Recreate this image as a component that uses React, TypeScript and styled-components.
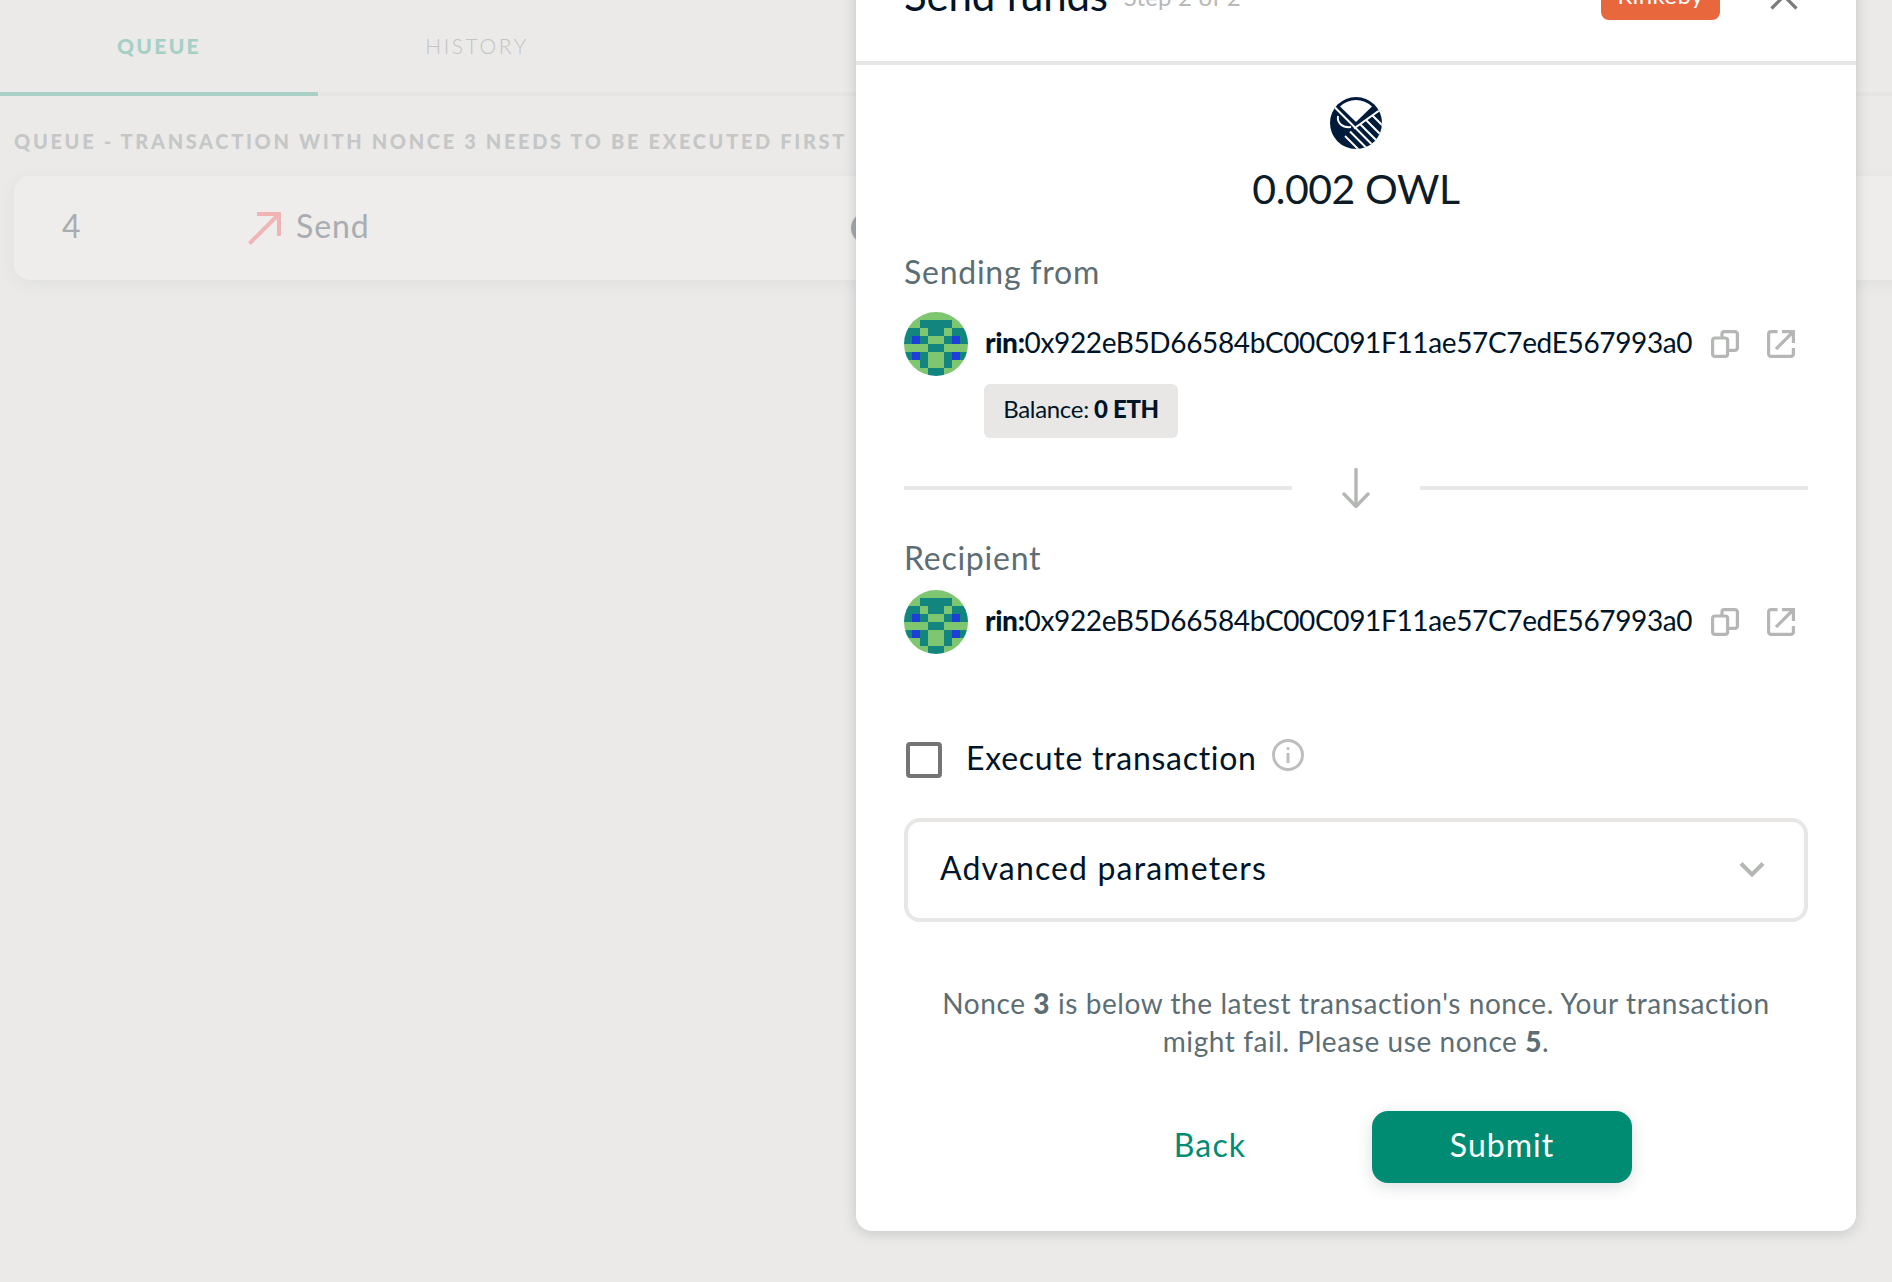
import React from "react";
import styled, { createGlobalStyle } from "styled-components";

const GlobalStyle = createGlobalStyle`
  html, body {
    margin: 0;
    padding: 0;
    height: 100%;
    overflow: hidden;
    font-family: Lato, "Open Sans", sans-serif;
    background: #ebeae8;
  }
`;

const Page = styled.div`
  position: relative;
  width: 1892px;
  height: 1282px;
  overflow: hidden;
  background: #ebeae8;
`;

const Tabs = styled.div`
  display: flex;
  height: 92px;
  border-bottom: 4px solid #e6e5e3;
`;

const Tab = styled.div<{ $active?: boolean }>`
  width: 318px;
  height: 96px;
  box-sizing: border-box;
  display: flex;
  align-items: center;
  justify-content: center;
  padding-bottom: 2px;
  font-size: 21px;
  letter-spacing: ${(p) => (p.$active ? "2.3px" : "2.6px")};
  font-weight: ${(p) => (p.$active ? 900 : 300)};
  color: ${(p) => (p.$active ? "#a6d0c6" : "#c2c4c6")};
  border-bottom: 4px solid ${(p) => (p.$active ? "#aacfc6" : "transparent")};
`;

const QueueTitle = styled.h2`
  margin: 29px 0 0 14px;
  font-size: 20px;
  line-height: 32px;
  font-weight: 900;
  letter-spacing: 2.65px;
  color: #c5c7c7;
  white-space: nowrap;
`;

const QueueCard = styled.div`
  display: grid;
  grid-template-columns: 186px 603px 32px;
  align-items: center;
  height: 104px;
  margin: 19px -40px 0 14px;
  padding-left: 48px;
  border-radius: 16px;
  background: #eeedeb;
  box-shadow: 0 4px 20px rgba(40, 54, 61, 0.05);
  color: #a9acb1;
  font-size: 32px;
`;

const SendCell = styled.div`
  display: flex;
  align-items: center;
  gap: 15px;
`;

const TxText = styled.span`
  margin-bottom: 6px;
  letter-spacing: 0.9px;
`;

const Ghost = styled.div`
  width: 32px;
  height: 32px;
  border-radius: 50%;
  background: #a3a8ad;
`;

const Overlay = styled.div`
  position: absolute;
  inset: 0;
  display: flex;
  align-items: flex-end;
  padding: 0 0 51px 856px;
`;

const Modal = styled.section`
  width: 1000px;
  display: flex;
  flex-direction: column;
  flex-shrink: 0;
  background: #fff;
  border-radius: 0 0 16px 16px;
  box-shadow: 0 2px 14px rgba(40, 54, 61, 0.2);
  color: #001428;
`;

const Header = styled.header`
  display: flex;
  align-items: flex-end;
  height: 120px;
  box-sizing: border-box;
  padding: 0 48px 41px 48px;
  border-bottom: 4px solid #e6e6e5;
`;

const Title = styled.h1`
  margin: 0 0 1px;
  font-size: 42px;
  line-height: 48px;
  font-weight: 400;
  letter-spacing: -0.2px;
`;

const Step = styled.span`
  margin: 0 0 7px 16px;
  font-size: 24px;
  line-height: 32px;
  color: #b8b8b8;
  letter-spacing: 0.2px;
`;

const NetworkChip = styled.div`
  margin-left: auto;
  width: 119px;
  height: 52px;
  display: flex;
  align-items: center;
  justify-content: center;
  border-radius: 0 0 8px 8px;
  background: #e8673c;
  color: #fff;
  font-size: 24px;
  letter-spacing: 0.4px;
`;

const CloseButton = styled.button`
  margin: 0 10px 10px 50px;
  padding: 0;
  border: 0;
  background: none;
  display: block;
  line-height: 0;
`;

const Body = styled.div`
  display: flex;
  flex-direction: column;
  padding: 32px 48px 48px;
`;

const TokenLogo = styled.svg`
  display: block;
  align-self: center;
`;

const Amount = styled.div`
  margin-top: 16px;
  text-align: center;
  font-size: 41px;
  line-height: 48px;
  letter-spacing: -0.43px;
  color: #0e1c28;
`;

const Label = styled.div<{ $gap: number }>`
  margin-top: ${(p) => p.$gap}px;
  font-size: 32px;
  line-height: 40px;
  letter-spacing: 0.75px;
  color: #5d6d74;
`;

const AddressRow = styled.div<{ $gap: number }>`
  margin-top: ${(p) => p.$gap}px;
  display: flex;
  align-items: center;
  height: 64px;
`;

const Avatar = styled.svg`
  display: block;
  width: 64px;
  height: 64px;
  border-radius: 50%;
  flex-shrink: 0;
`;

const Address = styled.span`
  margin: 0 0 5px 17px;
  width: 710px;
  flex-shrink: 0;
  font-size: 28px;
  letter-spacing: -0.36px;
  white-space: nowrap;
  color: #001428;
`;

const Prefix = styled.b`
  font-weight: 900;
`;

const IconButton = styled.span<{ $gap: number }>`
  margin-left: ${(p) => p.$gap}px;
  line-height: 0;
  color: #b4b7b4;
`;

const Balance = styled.div`
  align-self: flex-start;
  margin: 8px 0 0 80px;
  width: 194px;
  height: 54px;
  box-sizing: border-box;
  display: flex;
  align-items: center;
  justify-content: center;
  gap: 5px;
  padding-bottom: 5px;
  border-radius: 6px;
  background: #e8e7e6;
  font-size: 24px;
  letter-spacing: -0.3px;
  white-space: nowrap;
`;

const BalanceValue = styled.b`
  font-weight: 900;
`;

const ArrowDivider = styled.div`
  margin-top: 30px;
  display: grid;
  grid-template-columns: 1fr 128px 1fr;
  align-items: center;
  height: 40px;
  color: #b4b7b4;
`;

const Rule = styled.div`
  height: 4px;
  background: #e8e7e6;
`;

const ArrowCell = styled.div`
  display: flex;
  justify-content: center;
  line-height: 0;
`;

const ExecuteRow = styled.label`
  margin-top: 88px;
  height: 36px;
  display: flex;
  align-items: center;
  padding-left: 2px;
`;

const Box = styled.span`
  width: 36px;
  height: 36px;
  box-sizing: border-box;
  border: 4px solid #757575;
  border-radius: 4px;
  flex-shrink: 0;
`;

const ExecuteText = styled.span`
  margin: 0 0 6px 24px;
  font-size: 32px;
  letter-spacing: 0.72px;
`;

const InfoIcon = styled.span`
  margin: 0 0 11px 15px;
  line-height: 0;
  color: #bcbdbc;
`;

const Advanced = styled.div`
  margin-top: 40px;
  height: 104px;
  box-sizing: border-box;
  display: flex;
  align-items: center;
  justify-content: space-between;
  padding: 0 39px 0 32px;
  border: 4px solid #e8e7e6;
  border-radius: 16px;
  font-size: 32px;
  letter-spacing: 1.15px;
`;

const AdvancedText = styled.span`
  margin-bottom: 6px;
`;

const Chevron = styled.span`
  line-height: 0;
  color: #b4b7b4;
  margin-bottom: 2px;
`;

const Notice = styled.p`
  margin: 62px 0 0;
  text-align: center;
  font-size: 28px;
  line-height: 38px;
  letter-spacing: 0.58px;
  color: #5d6d74;
`;

const NoticeValue = styled.b`
  font-weight: 900;
`;

const Actions = styled.div`
  margin-top: 51px;
  display: flex;
  align-items: center;
  justify-content: center;
  gap: 32px;
`;

const BackButton = styled.button`
  width: 260px;
  height: 72px;
  border: 0;
  background: none;
  padding: 0 0 6px;
  font: inherit;
  font-size: 32px;
  letter-spacing: 1.2px;
  color: #008c73;
`;

const SubmitButton = styled.button`
  width: 260px;
  height: 72px;
  border: 0;
  border-radius: 16px;
  padding: 0 0 6px;
  font: inherit;
  font-size: 32px;
  letter-spacing: 1px;
  color: #fff;
  background: #008c73;
  box-shadow: 0 4px 16px rgba(40, 54, 61, 0.16);
`;

const IDENTICON = [
  "GGGGGGGG",
  "GGTTTTGG",
  "TTGTTGTT",
  "TBTGGTBT",
  "GGGTTGGG",
  "TBTGGTBT",
  "GGTGGTGG",
  "GGGTTGGG",
];

const CELL_COLOR: Record<string, string> = {
  G: "#7fc671",
  T: "#12857f",
  B: "#1d3fd8",
};

function Identicon() {
  return (
    <Avatar viewBox="0 0 8 8" shapeRendering="crispEdges">
      {IDENTICON.flatMap((row, y) =>
        row.split("").map((cell, x) => (
          <rect key={`${x}-${y}`} x={x} y={y} width="1" height="1" fill={CELL_COLOR[cell]} />
        ))
      )}
    </Avatar>
  );
}

function OwlLogo() {
  return (
    <TokenLogo width="52" height="52" viewBox="0 0 52 52">
      <defs>
        <clipPath id="owl-clip">
          <circle cx="26" cy="26" r="26" />
        </clipPath>
      </defs>
      <circle cx="26" cy="26" r="26" fill="#001a3a" />
      <g clipPath="url(#owl-clip)" stroke="#fff" strokeWidth="2" fill="none">
        <path d="M10 9.500A23 23 0 0 1 42 9.500L26 25Z" fill="#fff" stroke="none" />
        <path d="M0 5.500 48 53.500" />
        <path d="M24 31.500 54 10" />
        <path d="M8 19C7 26 12 31 21 30" />
        <path d="M30 27 56 53" />
        <path d="M36 23 58 45" />
        <path d="M42.500 18.500 58 34" />
        <path d="M20 34.500 40 54.500" />
        <path d="M15 39 30 54" />
      </g>
    </TokenLogo>
  );
}

function CopyIcon() {
  return (
    <svg width="28" height="28" viewBox="0 0 28 28" fill="none" stroke="currentColor" strokeWidth="3.200">
      <rect x="1.600" y="8" width="15" height="18.400" rx="2.500" />
      <path d="M11 7V4a2.400 2.400 0 0 1 2.400-2.400h10.600a2.400 2.400 0 0 1 2.400 2.400v14a2.400 2.400 0 0 1-2.400 2.400h-7.500" />
    </svg>
  );
}

function ExternalIcon() {
  return (
    <svg width="28" height="28" viewBox="0 0 28 28" fill="none" stroke="currentColor" strokeWidth="3.200">
      <path d="M10.500 1.600H4a2.400 2.400 0 0 0-2.400 2.400v20a2.400 2.400 0 0 0 2.400 2.400h20a2.400 2.400 0 0 0 2.400-2.400V18" />
      <path d="M9 19 25 3" />
      <path d="M15 1.600h11.400V13" />
    </svg>
  );
}

function AddressLine({ gap }: { gap: number }) {
  return (
    <AddressRow $gap={gap}>
      <Identicon />
      <Address>
        <Prefix>rin:</Prefix>0x922eB5D66584bC00C091F11ae57C7edE567993a0
      </Address>
      <IconButton $gap={16}>
        <CopyIcon />
      </IconButton>
      <IconButton $gap={28}>
        <ExternalIcon />
      </IconButton>
    </AddressRow>
  );
}

export default function App() {
  return (
    <Page>
      <GlobalStyle />
      <Tabs>
        <Tab $active>QUEUE</Tab>
        <Tab>HISTORY</Tab>
      </Tabs>
      <QueueTitle>QUEUE - TRANSACTION WITH NONCE 3 NEEDS TO BE EXECUTED FIRST</QueueTitle>
      <QueueCard>
        <TxText>4</TxText>
        <SendCell>
          <svg width="33" height="33" viewBox="0 0 33 33" fill="none" stroke="#f0b4b4" strokeWidth="4">
            <path d="M1.500 31.500 30 3" />
            <path d="M9 2h22v22" />
          </svg>
          <TxText>Send</TxText>
        </SendCell>
        <Ghost />
      </QueueCard>
      <Overlay>
        <Modal>
          <Header>
            <Title>Send funds</Title>
            <Step>Step 2 of 2</Step>
            <NetworkChip>Rinkeby</NetworkChip>
            <CloseButton aria-label="Close">
              <svg width="28" height="28" viewBox="0 0 28 28" stroke="#7b7b7b" strokeWidth="3.200">
                <path d="M1.500 1.500 26.500 26.500M26.500 1.500 1.500 26.500" />
              </svg>
            </CloseButton>
          </Header>
          <Body>
            <OwlLogo />
            <Amount>0.002 OWL</Amount>
            <Label $gap={39}>Sending from</Label>
            <AddressLine gap={20} />
            <Balance>
              Balance: <BalanceValue>0 ETH</BalanceValue>
            </Balance>
            <ArrowDivider>
              <Rule />
              <ArrowCell>
                <svg width="28" height="40" viewBox="0 0 28 40" fill="none" stroke="currentColor" strokeWidth="3.400" strokeLinecap="round">
                  <path d="M14 1.500V38" />
                  <path d="M2 26 14 38.500 26 26" />
                </svg>
              </ArrowCell>
              <Rule />
            </ArrowDivider>
            <Label $gap={30}>Recipient</Label>
            <AddressLine gap={12} />
            <ExecuteRow>
              <Box />
              <ExecuteText>Execute transaction</ExecuteText>
              <InfoIcon>
                <svg width="32" height="32" viewBox="0 0 32 32" fill="none" stroke="currentColor" strokeWidth="3">
                  <circle cx="16" cy="16" r="14.500" />
                  <path d="M16 14v10" />
                  <circle cx="16" cy="9.500" r="1.500" fill="currentColor" stroke="none" />
                </svg>
              </InfoIcon>
            </ExecuteRow>
            <Advanced>
              <AdvancedText>Advanced parameters</AdvancedText>
              <Chevron>
                <svg width="26" height="16" viewBox="0 0 26 16" fill="none" stroke="currentColor" strokeWidth="4">
                  <path d="M2 2.500 13 13.500 24 2.500" />
                </svg>
              </Chevron>
            </Advanced>
            <Notice>
              Nonce <NoticeValue>3</NoticeValue> is below the latest transaction's nonce. Your transaction
              <br />
              might fail. Please use nonce <NoticeValue>5</NoticeValue>.
            </Notice>
            <Actions>
              <BackButton>Back</BackButton>
              <SubmitButton>Submit</SubmitButton>
            </Actions>
          </Body>
        </Modal>
      </Overlay>
    </Page>
  );
}
